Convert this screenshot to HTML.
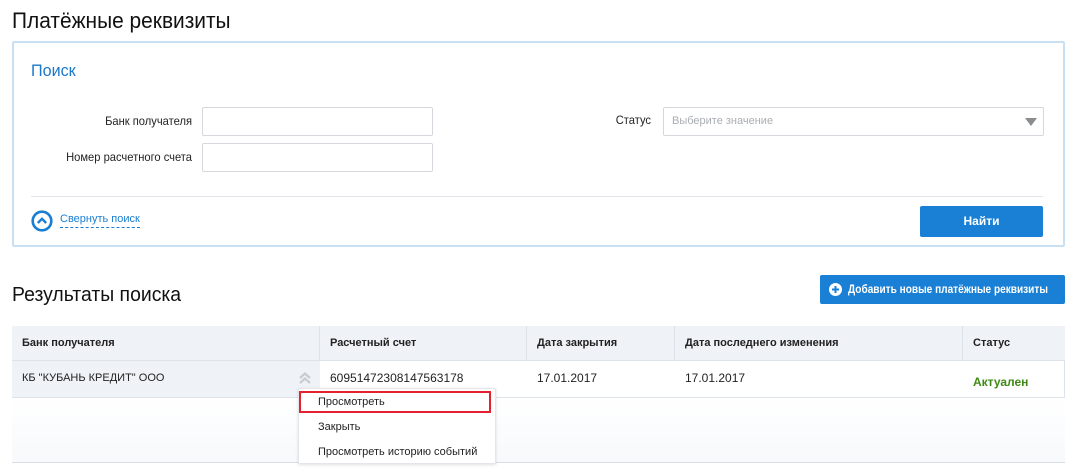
<!DOCTYPE html>
<html><head><meta charset="utf-8"><style>
*{margin:0;padding:0;box-sizing:border-box}
body{width:1077px;height:475px;background:#fff;font-family:"Liberation Sans",sans-serif;position:relative;overflow:hidden;color:#222}
.a{position:absolute;white-space:nowrap}
.inp{position:absolute;border:1px solid #d4d7db;border-radius:2px;background:#fff}
.lbl{position:absolute;font-size:12px;color:#222;text-align:right;width:190px;transform:scaleX(0.93);transform-origin:right center;white-space:nowrap}
.th{position:absolute;top:326px;height:34px;font-size:11px;font-weight:bold;line-height:34px;padding-left:10px;border-right:1px solid #dde3ea}
.td{position:absolute;top:360px;height:37px;font-size:12px;line-height:36px;padding-left:10px}
</style></head><body>
<div class="a" style="left:12px;top:8px;font-size:22px;color:#111;transform:scaleX(0.95);transform-origin:left">Платёжные реквизиты</div>
<div class="a" style="left:12px;top:41px;width:1053px;height:206px;border:2px solid #c7e0f4;border-radius:2px"></div>
<div class="a" style="left:31px;top:61px;font-size:17px;color:#1a78c9;transform:scaleX(0.95);transform-origin:left">Поиск</div>
<div class="lbl" style="left:2px;top:114px">Банк получателя</div>
<div class="inp" style="left:202px;top:107px;width:231px;height:29px"></div>
<div class="lbl" style="left:2px;top:150px">Номер расчетного счета</div>
<div class="inp" style="left:202px;top:143px;width:231px;height:29px"></div>
<div class="lbl" style="left:461px;top:113px">Статус</div>
<div class="inp" style="left:663px;top:107px;width:381px;height:29px"></div>
<div class="a" style="left:672px;top:115px;font-size:11px;color:#a9adb2">Выберите значение</div>
<div class="a" style="left:1025px;top:118px;width:0;height:0;border-left:6px solid transparent;border-right:6px solid transparent;border-top:8px solid #8a8d90"></div>
<div class="a" style="left:31px;top:196px;width:1012px;height:1px;background:#e1e4e8"></div>
<svg class="a" style="left:31px;top:210px" width="22" height="22" viewBox="0 0 22 22"><circle cx="11" cy="11" r="9.3" fill="none" stroke="#1a7ed2" stroke-width="2.6"/><path d="M6.8 13 L11 8.8 L15.2 13" fill="none" stroke="#1a7ed2" stroke-width="2.4"/></svg>
<div class="a" style="left:60px;top:213px;font-size:11px;color:#1a7ed2;border-bottom:1px dashed #1a7ed2;padding-bottom:2px">Свернуть поиск</div>
<div class="a" style="left:920px;top:206px;width:123px;height:31px;background:#1a80d6;border-radius:2px;color:#fff;font-size:12px;font-weight:bold;text-align:center;line-height:31px">Найти</div>
<div class="a" style="left:12px;top:284px;font-size:20px;color:#111;transform:scaleX(0.97);transform-origin:left">Результаты поиска</div>
<div class="a" style="left:820px;top:275px;width:245px;height:29px;background:#1a80d6;border-radius:2px;color:#fff;font-size:12px;line-height:29px"><svg style="position:absolute;left:9px;top:8px" width="13" height="13" viewBox="0 0 13 13"><circle cx="6.5" cy="6.5" r="6.5" fill="#fff"/><path d="M6.5 3v7M3 6.5h7" stroke="#1a80d6" stroke-width="2"/></svg><span style="position:absolute;left:28px;font-weight:bold;transform:scaleX(0.84);transform-origin:left">Добавить новые платёжные реквизиты</span></div>
<div class="a" style="left:12px;top:326px;width:1053px;height:72px;border:1px solid #dde3ea"></div>
<div class="a" style="left:12px;top:326px;width:1053px;height:34px;background:#eff3f7"></div>
<div class="a" style="left:12px;top:360px;width:308px;height:37px;background:#eff3f7"></div>
<div class="th" style="left:12px;width:308px">Банк получателя</div>
<div class="th" style="left:320px;width:207px">Расчетный счет</div>
<div class="th" style="left:527px;width:148px">Дата закрытия</div>
<div class="th" style="left:675px;width:288px">Дата последнего изменения</div>
<div class="th" style="left:963px;width:100px;border-right:none">Статус</div>
<div class="a" style="left:12px;top:360px;width:1053px;height:1px;background:#dde3ea"></div>
<div class="td" style="left:12px;font-size:11px">КБ "КУБАНЬ КРЕДИТ" ООО</div>
<svg class="a" style="left:298px;top:371px" width="14" height="14" viewBox="0 0 14 14"><path d="M2 7l5-4.5 5 4.5M2 12l5-4.5 5 4.5" fill="none" stroke="#c5ccd2" stroke-width="2.2"/></svg>
<div class="td" style="left:320px">60951472308147563178</div>
<div class="td" style="left:527px">17.01.2017</div>
<div class="td" style="left:675px">17.01.2017</div>
<div class="td" style="left:963px;font-weight:bold;color:#3f8a16;top:364px">Актуален</div>
<div class="a" style="left:12px;top:398px;width:1053px;height:64px;background:linear-gradient(#fff,#f7f9fb)"></div>
<div class="a" style="left:12px;top:462px;width:1053px;height:1px;background:#d8dee5"></div>
<div class="a" style="left:298px;top:388px;width:198px;height:76px;background:#fff;border:1px solid #e3e6ea;box-shadow:0 1px 3px rgba(0,0,0,.12)"></div>
<div class="a" style="left:299px;top:391px;width:192px;height:22px;border:2px solid #e52030"></div>
<div class="a" style="left:318px;top:396px;font-size:11px">Просмотреть</div>
<div class="a" style="left:318px;top:421px;font-size:11px">Закрыть</div>
<div class="a" style="left:318px;top:446px;font-size:11px">Просмотреть историю событий</div>
</body></html>
